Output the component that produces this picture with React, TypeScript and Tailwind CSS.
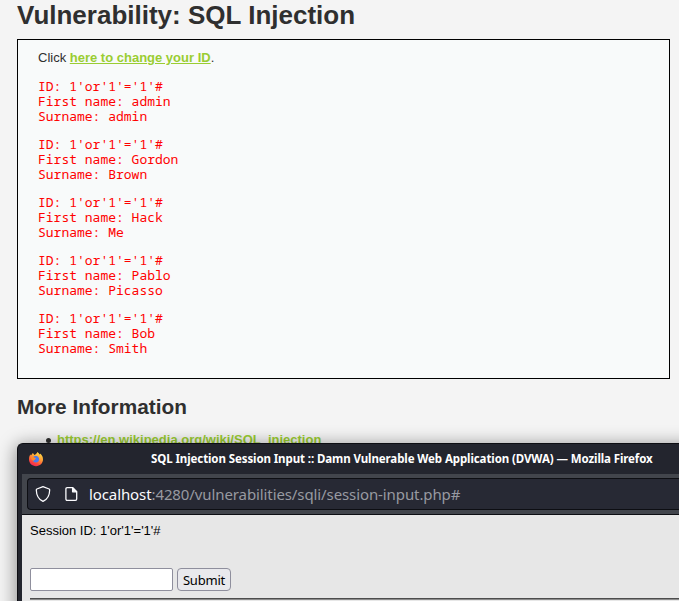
const users = [
  ['admin', 'admin'],
  ['Gordon', 'Brown'],
  ['Hack', 'Me'],
  ['Pablo', 'Picasso'],
  ['Bob', 'Smith'],
];

function FirefoxLogo() {
  return (
    <svg width="16" height="16" viewBox="0 0 16 16" className="shrink-0">
      <defs>
        <linearGradient id="flame" x1="0.8" y1="0" x2="0.3" y2="1">
          <stop offset="0" stopColor="#ffe14a" />
          <stop offset="0.4" stopColor="#ffa436" />
          <stop offset="0.75" stopColor="#ff4a3b" />
          <stop offset="1" stopColor="#ee2459" />
        </linearGradient>
      </defs>
      <path
        d="M9.300 1c1.200.8 2 1.700 2.400 2.600.5-.2.6-.7.5-1.100 1.700 1.300 2.800 3.500 2.800 5.800 0 3.900-3 6.900-7 6.900s-7-3-7-6.900C1 6.200 1.500 4.500 2.600 3.300c0 .5.1.9.3 1.200.6-.8 1.500-1.800 1.900-2.500.8.5 1.200 1.200 1.500 2C7.800 3.500 8.900 2.300 9.300 1z"
        fill="url(#flame)"
      />
      <path d="M5 6.500c.8-1.300 2.600-1.700 4.200-1.200 1.300.7 2 1.900 1.900 3.200-.1 1.800-1.500 3-3.200 3-1.800 0-3.100-1.100-3.400-2.800 1 .5 2 .3 2.700-.3L5 6.500z" fill="#4a7cf0" />
      <path d="M3 6.200c1-.7 2.200-.6 3 .1.600.5 1.200.7 2 .7-.1.800-1 1.100-1.600 1.500-.4.300-.5.800-.2 1.300C4.500 10 3.200 8.500 3 6.200z" fill="#ff8a2a" />
    </svg>
  );
}

function ShieldIcon() {
  return (
    <svg width="16" height="18" viewBox="0 0 16 18" fill="none" stroke="#fbfbfe" strokeWidth="1.25" strokeLinejoin="round" className="shrink-0">
      <path d="M8 1.600 14.100 4c.4.200.6.500.6.900-.1 5.200-2.200 9.300-6.700 11.500C3.500 14.200 1.400 10.100 1.300 4.900c0-.4.200-.7.6-.9L8 1.600z" />
    </svg>
  );
}

function PageIcon() {
  return (
    <svg width="13" height="16" viewBox="0 0 13 16" fill="none" stroke="#fbfbfe" strokeWidth="1.300" strokeLinejoin="round" className="shrink-0">
      <path d="M2.200 1.700h5.600l3.900 3.900v7.400c0 .8-.5 1.300-1.300 1.300H2.200c-.8 0-1.300-.5-1.300-1.300V3c0-.8.500-1.300 1.300-1.300z" />
      <path d="M7.600 1.900v3.900h3.900z" fill="#fbfbfe" />
    </svg>
  );
}

function BrowserWindow() {
  return (
    <div className="absolute left-[17px] top-[443px] h-[200px] w-[760px] overflow-hidden rounded-tl-[6px] border-l border-t border-[#0d0e13] bg-[#23252e] pl-1 shadow-[0_3px_17px_2px_rgba(0,0,0,0.4)]">
      <div className="flex h-[30px] items-center pl-[6px] font-['Noto_Sans',sans-serif] text-[11.5px] font-bold text-white">
        <FirefoxLogo />
        <span className="ml-[107px] whitespace-nowrap tracking-[-0.1px]">SQL Injection Session Input :: Damn Vulnerable Web Application (DVWA) — Mozilla Firefox</span>
      </div>
      <div className="h-[41px] border-b border-[#0d0e13] bg-[#42454c] pl-[5px] pt-1">
        <div className="flex h-8 items-center rounded-l-[4px] border border-r-0 border-[#0d0e13] bg-[#272934] pl-[7px] font-['Noto_Sans',sans-serif] text-[15px] text-[#989aa1]">
          <ShieldIcon />
          <div className="ml-[14px] flex"><PageIcon /></div>
          <span className="ml-[11px] whitespace-nowrap tracking-[-0.1px]"><span className="text-[#fbfbfe]">localhost</span>:4280/vulnerabilities/sqli/session-input.php#</span>
        </div>
      </div>
      <div className="h-[130px] bg-[#e7e7e7] pl-2 pt-2 text-[13px] leading-[15px] text-black">
        <p>Session ID: 1'or'1'='1'#</p>
        <div className="mt-[30px] flex gap-1">
          <input className="h-[23px] w-[143px] rounded-[2px] border border-[#8f8f9d] bg-white" />
          <button className="h-[23px] w-[54px] rounded-[4px] border border-[#8f8f9d] bg-[#e9e9ed] font-['Noto_Sans',sans-serif] text-[13px] leading-[20px] tracking-[-0.2px]">Submit</button>
        </div>
        <div className="mt-[7px] h-[2px] border-t border-[#4d4d4d] bg-[#8c8c8c]" />
      </div>
    </div>
  );
}

export default function App() {
  return (
    <main className="relative h-[601px] w-[679px] overflow-hidden bg-[#f4f4f4] pl-[17px] font-['Liberation_Sans',Arial,sans-serif] text-[13px] text-[#2f2f2f]">
      <h1 className="h-[39px] text-[26px] font-bold leading-[30px]">Vulnerability: SQL Injection</h1>
      <section className="h-[340px] w-[653px] border border-black bg-[#f8fafa] pl-5 pt-[10px]">
        <p className="leading-[15px]">
          Click <a href="#" className="font-bold text-[#9acd32] underline">here to change your ID</a>.
        </p>
        <div className="mt-[14px] flex flex-col gap-[13px]">
          {users.map(([first, last]) => (
            <pre key={first} className="font-['Noto_Sans_Mono','DejaVu_Sans_Mono',monospace] text-[13px] leading-[15px] text-[#ff0000]">{`ID: 1'or'1'='1'#\nFirst name: ${first}\nSurname: ${last}`}</pre>
          ))}
        </div>
      </section>
      <h2 className="mt-[16px] text-[20.8px] font-bold leading-6">More Information</h2>
      <ul className="mt-[13px] pl-10 leading-[15px]">
        <li className="relative before:absolute before:-left-[11px] before:top-[6px] before:size-[5px] before:rounded-full before:bg-[#2f2f2f]"><a href="#" className="font-bold text-[#9acd32] underline">https://en.wikipedia.org/wiki/SQL_injection</a></li>
      </ul>
      <BrowserWindow />
    </main>
  );
}
